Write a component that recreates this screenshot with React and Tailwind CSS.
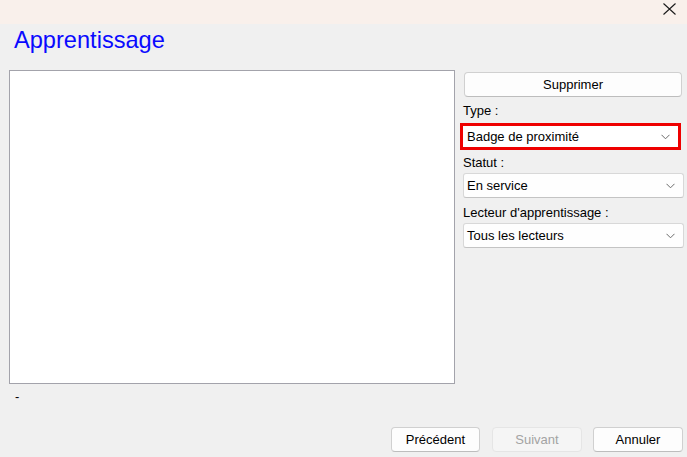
import React from "react";

function Chevron() {
  return (
    <svg width="9" height="6" viewBox="0 0 9 6" className="absolute right-[8px] top-1/2 -translate-y-1/2">
      <path d="M0.5 0.8 L4.5 4.8 L8.5 0.8" fill="none" stroke="#6b6b6b" strokeWidth="1" />
    </svg>
  );
}

function Select({ text }) {
  return (
    <div className="relative ml-[3px] w-[221px] h-[25px] bg-[#fefefe] border border-[#d8d8d8] border-b-[#c4c4c4] rounded-[3px] flex items-center pl-[3px]">
      <span className="leading-[16px] pt-[1px]">{text}</span>
      <Chevron />
    </div>
  );
}

function Button({ children, disabled, className = "" }) {
  return (
    <div
      className={
        "h-[25px] rounded-[4px] border flex items-center justify-center leading-[16px] " +
        (disabled
          ? "bg-[#f5f5f5] border-[#e5e5e5] text-[#a3a3a3] "
          : "bg-[#fdfdfd] border-[#d0d0d0] border-b-[#bdbdbd] text-black ") +
        className
      }
    >
      {children}
    </div>
  );
}

export default function App() {
  return (
    <div className="w-[687px] h-[457px] flex flex-col bg-[#f0f0f0] font-['Liberation_Sans',Arial,sans-serif] text-[13px] text-black overflow-hidden">
      <div className="h-[24px] shrink-0 bg-[#f9f0eb] relative">
        <svg width="13" height="12" viewBox="0 0 13 12" className="absolute left-[663px] top-[3px]">
          <path d="M0.5 0.5 L12.5 11.5 M12.5 0.5 L0.5 11.5" stroke="#1a1a1a" strokeWidth="1.1" fill="none" />
        </svg>
      </div>
      <div className="mt-[2px] pl-[14px] h-[28px] leading-[28px] text-[23.6px] text-[#0a0aff]">Apprentissage</div>
      <div className="mt-[16px] flex">
        <div className="ml-[9px] w-[446px] h-[314px] bg-white border border-[#a3a3ab]" />
        <div className="ml-[5px] w-[224px] flex flex-col">
          <Button className="mt-[2px] ml-[4px] w-[218px]">Supprimer</Button>
          <div className="mt-[6px] ml-[3px] leading-[16px]">Type :</div>
          <div className="mt-[4px] w-[221px] h-[27px] border-[3px] border-[#ee0000] bg-white relative flex items-center pl-[4px]">
            <span className="leading-[16px] pt-[1px]">Badge de proximité</span>
            <Chevron />
          </div>
          <div className="mt-[5px] ml-[3px] leading-[16px]">Statut :</div>
          <div className="mt-[2px]">
            <Select text="En service" />
          </div>
          <div className="mt-[7px] ml-[3px] leading-[16px]">Lecteur d'apprentissage :</div>
          <div className="mt-[2px]">
            <Select text="Tous les lecteurs" />
          </div>
        </div>
      </div>
      <div className="mt-[5px] pl-[15px] leading-[16px]">-</div>
      <div className="mt-auto mb-[5px] flex justify-end pr-[4px]">
        <Button className="w-[89px]">Précédent</Button>
        <Button disabled className="ml-[12px] w-[90px]">Suivant</Button>
        <Button className="ml-[11px] w-[90px]">Annuler</Button>
      </div>
    </div>
  );
}
